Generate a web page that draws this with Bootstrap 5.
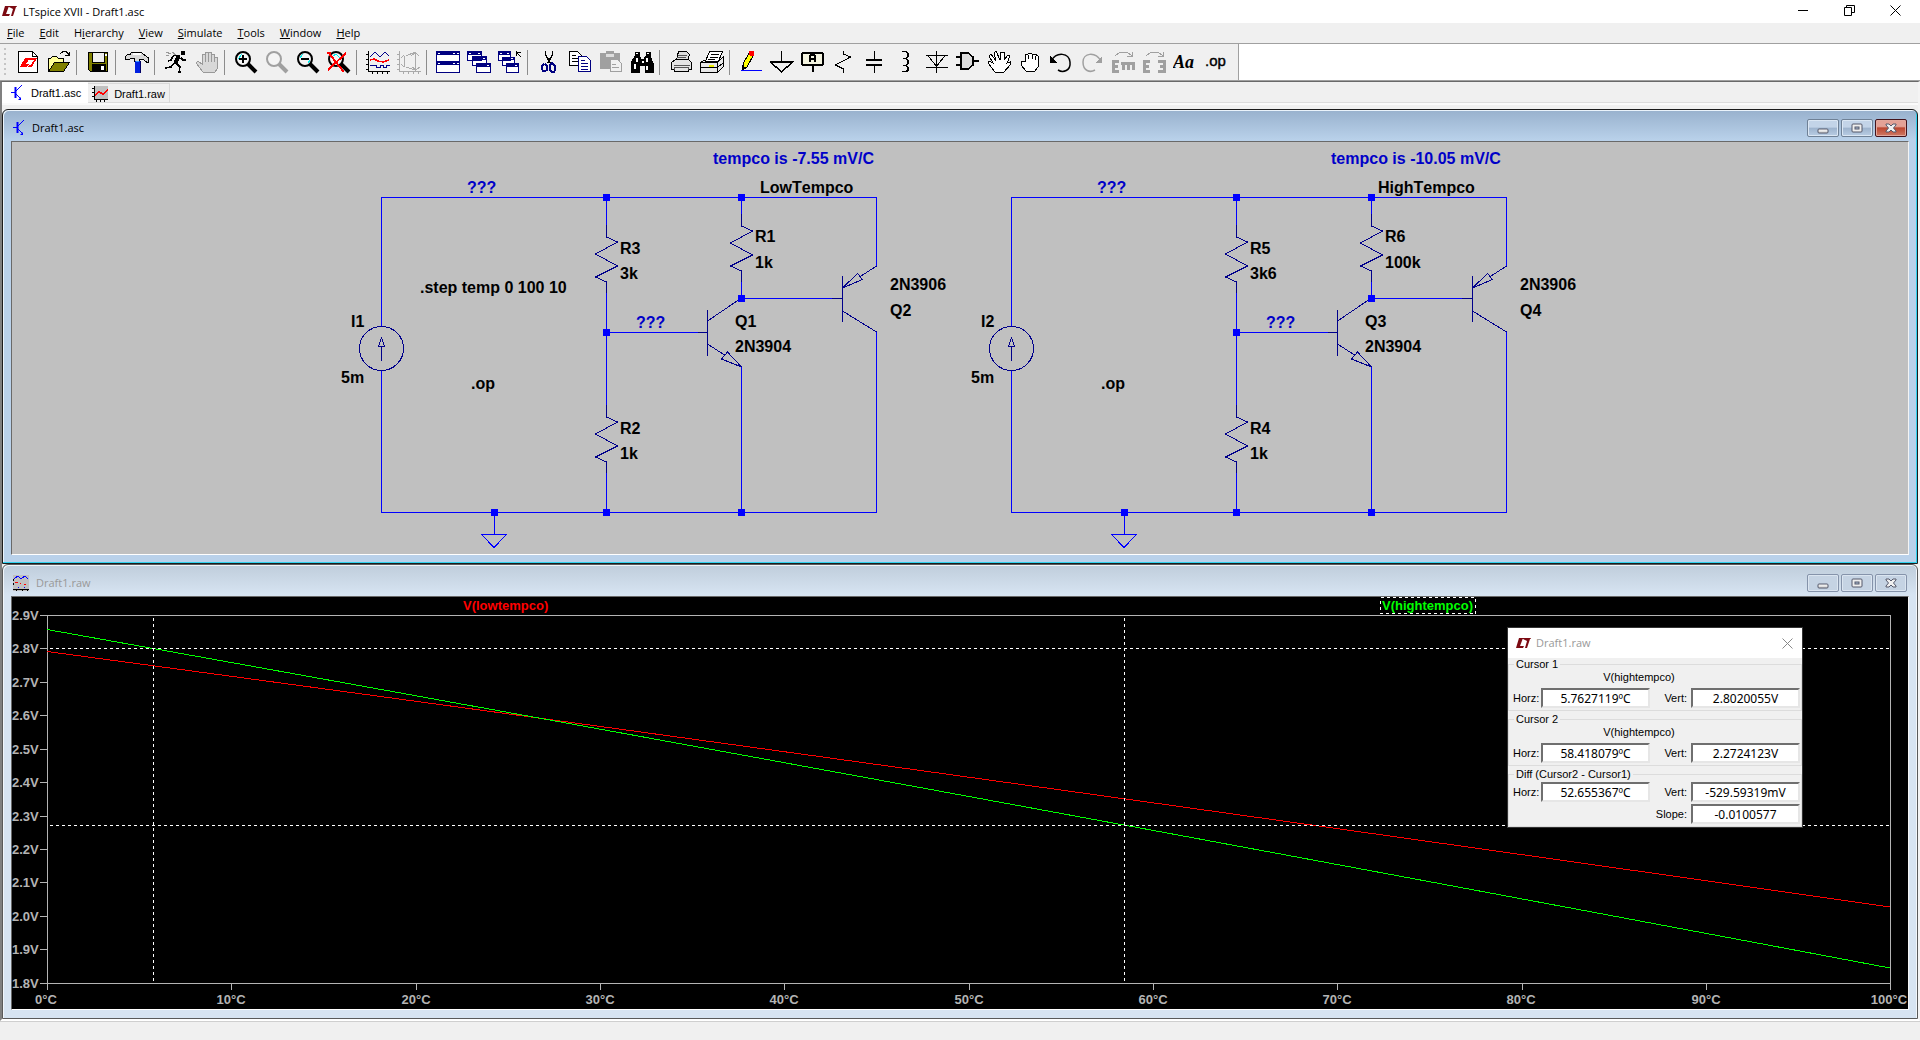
<!DOCTYPE html>
<html lang="en">
<head>
<meta charset="utf-8">
<meta name="viewport" content="width=device-width, initial-scale=1">
<title>LTspice XVII - Draft1.asc</title>
<link href="https://cdn.jsdelivr.net/npm/bootstrap@5.3.0/dist/css/bootstrap.min.css" rel="stylesheet">
<style>
body{background:#f0f0f0;color:#000;font-family:"Open Sans","Noto Sans",sans-serif;font-size:11px;line-height:16px;min-height:100vh}
button{border:0;background:none;padding:0;color:inherit}
svg{display:block;flex:none}
.app-title{height:23px;background:#fff;padding:0 2px}
.app-title .caption{font-size:11px;margin-left:6px}
.sys-btn{width:46px;height:21px;display:flex;align-items:center;justify-content:center}
.menu-bar{height:21px;border-bottom:1px solid #a0a0a0;gap:1px}
.menu-bar a{color:#000;text-decoration:none;padding:2px 7px;font-size:11px;line-height:16px}
.tool-row{background:#fff;height:37px;border-bottom:1px solid #a0a0a0}
.tool-bar{background:#f0f0f0;border-right:1px solid #a0a0a0;padding:0 7px 0 4px;align-items:center}
.grip{width:8px;height:28px;background:repeating-linear-gradient(#c4c4c4 0 2px,transparent 2px 5px) no-repeat;background-size:2px 100%}
.tool-bar button{width:31px;height:32px;display:flex;align-items:center;justify-content:center}
.sep{width:8px;height:25px;background:linear-gradient(#8c8c8c,#8c8c8c) 2px 0/1px 100% no-repeat}
.tool-bar svg{width:24px;height:24px;shape-rendering:crispEdges;fill:none;stroke:#000}
.mdi{border-top:1px solid #696969;border-left:2px solid #808080;border-right:2px solid #f4f4f4;border-bottom:2px solid #fff}
.tab-strip{height:23px;border-bottom:2px solid #fafafa;box-shadow:inset 0 -1px #dcdcdc}
.tab-strip button{font:11px/16px "Liberation Sans",Arial,sans-serif;display:flex;align-items:center;gap:8px;padding:0 7px 0 9px}
.tab-strip .on{background:#fff;height:21px}
.tab-strip .off{height:20px;border:1px solid #d9d9d9;border-left:0;border-bottom:0;padding:0 4px;gap:6px;align-self:flex-end}
.mdi-win{border:1px solid #1c1c1c;border-radius:6px 6px 0 0;padding:0 8px 8px;background:#b9d1ea}
.mdi-win.live{background:linear-gradient(#98b1cd 0,#b9d1ea 30px);box-shadow:inset -1px -1px #2fd2ef,inset 1px 1px #eaf3fb}
.mdi-win.idle{background:linear-gradient(#bfcddb 0,#d7e4f2 30px);border-color:#5a5a5a;box-shadow:inset 1px 1px #f1f6fb,inset -1px 0 #f1f6fb}
.win-head{height:31px;gap:7px;padding:4px 2px 0}
.idle .win-head span{color:#999}
.win-btns{gap:2px}
.win-btns button{width:32px;height:18px;border:1px solid #6f8196;border-radius:2px;box-shadow:inset 0 0 0 1px #dbe7f4;background:linear-gradient(#c3d4e8 0 45%,#9db3cd 50%,#b9cde4);display:flex;align-items:center;justify-content:center}
.win-btns button.shut{border-color:#43131c;box-shadow:inset 0 0 0 1px #e2a79c;background:linear-gradient(#e3a196 0 40%,#bc4630 50%,#cf7a66)}
.idle .win-btns button{border-color:#8593aa;background:#c5d3e3;box-shadow:inset 0 0 0 1px #dbe5f0}
.client{border:1px solid #696969;border-right-color:#f4f4f4;border-bottom-color:#fff;position:relative}
.client>svg{width:100%;height:auto;shape-rendering:crispEdges}
.sheet{background:#c0c0c0}
.sheet text{font:bold 16px "Liberation Sans",Arial,sans-serif;font-kerning:none}
.net{fill:#0000c8}
.plot{background:#000}
.plot text{font:bold 13px "Liberation Sans",Arial,sans-serif}
.readout{position:absolute;top:30px;right:105px;width:296px;background:#f0f0f0;border:1px solid #333;font:11px/13px "Liberation Sans",Arial,sans-serif}
.readout header{height:30px;background:#fff;padding:0 9px 0 8px;color:#999;font:11px/16px "Open Sans",sans-serif;gap:5px}
.readout fieldset{border:1px solid #dcdcdc;padding:0 0 2px;margin-bottom:2px}
.readout fieldset.diff{padding-top:1px;margin-bottom:0}
.readout legend{float:none;width:auto;margin:0 0 0 5px;padding:0 2px;font-size:11px;line-height:13px}
.trace{height:13px;margin-bottom:4px;text-align:center;padding-right:32px}
.pair{display:grid;grid-template-columns:32px 1fr 41px 1fr;align-items:center;row-gap:2px;padding-right:1px}
.pair label{padding-left:4px}
.pair label.rt{grid-column:3;text-align:right;padding:0 4px 0 0;justify-self:end}
.pair input{width:100%;min-width:0;height:20px;border:2px solid;border-color:#6f6f6f #e6e6e6 #e6e6e6 #6f6f6f;padding:0;text-align:center;background:#fff;color:#000;font:12px/16px "Noto Sans","Open Sans",sans-serif}
.status{border-top:1px solid #cfcfcf}
</style>
</head>
<body class="d-flex flex-column">
<svg width="0" height="0" class="position-absolute">
<defs>
<symbol id="lt" viewBox="0 0 15 11"><path fill="#7c0a12" d="M3 0h4L4 8h4l-1 2H0zM6 0h9l-.5 1H14l-3 9H9l2-7-4-2z"/></symbol>
<symbol id="bjt" viewBox="0 0 12 17"><path d="M0 8.500h4M5 7l6-6M5 10l5 5" stroke="#00f" fill="none"/><path d="M4.500 3v11" stroke="#00f" stroke-width="2"/><path d="M10 16H7l3-3z" fill="#00f"/></symbol>
<symbol id="lens" viewBox="0 0 24 24"><circle cx="9" cy="9" r="7" fill="#f4f4f4" stroke-width="2" shape-rendering="auto"/><path d="M14 14l8 8" stroke-width="4" shape-rendering="auto"/></symbol>
<g id="res"><path d="M0 -12V0l11 5-22 12 22 12-22 11L0 45V56"/></g>
<g id="dot"><path d="M-3-3h7v7h-7z" fill="#00f" stroke="none"/></g>
<g id="circuit">
<g fill="none" stroke="#00f">
<path d="M381.500 327V197.500H876.500V266M381.500 370V512.500H876.500V332M606.500 197V237M606.500 282V417M606.500 462V512M741.500 197V226M741.500 271V298.500H832M606 332.500H698M741.500 367V512"/>
</g>
<g fill="none" stroke="#00008b">
<circle cx="381.500" cy="348.500" r="22"/><path d="M381.500 361V346M381.500 338l3 8h-6z"/>
<use href="#res" x="606.500" y="237"/><use href="#res" x="741.500" y="226"/><use href="#res" x="606.500" y="417"/>
<path d="M698 332.500h9.500M707.500 310v46M707.500 321l34-23M707.500 344l17 11M741.500 367l-14-15-6 7z"/>
<path d="M832 298.500h10.500M842.500 276v46M842.500 311l34 21M876.500 266l-17 11M842.500 288l15-14.500 5 6z"/>
</g>
<use href="#dot" x="606" y="197"/><use href="#dot" x="741" y="197"/><use href="#dot" x="741" y="298"/><use href="#dot" x="606" y="332"/><use href="#dot" x="606" y="512"/><use href="#dot" x="741" y="512"/><use href="#dot" x="494" y="512"/>
<path d="M494.500 512v22M481.500 534.500h25l-12.500 13z" fill="none" stroke="#00f"/>
</g>
<linearGradient id="metal" x2="0" y2="1"><stop stop-color="#fff"/><stop offset="1" stop-color="#ccc"/></linearGradient>
<symbol id="w-min" viewBox="0 0 12 12"><rect x="1" y="7" width="10" height="4" rx="1" fill="url(#metal)" stroke="#54586b"/></symbol>
<symbol id="w-max" viewBox="0 0 12 12"><rect x="1" y="2" width="10" height="8" rx="1" fill="#eee" stroke="#54586b"/><rect x="4" y="5" width="4" height="2" fill="#a9bcd4" stroke="#54586b"/></symbol>
<symbol id="w-close" viewBox="0 0 12 12"><path d="M1 2h3l2 2 2-2h3v1L8.500 6 11 9v1H8L6 8l-2 2H1V9l2.500-3L1 3z" fill="#f0f0f0" stroke="#54586b"/></symbol>
</defs>
</svg>

<header class="app-title d-flex align-items-start">
<div class="d-flex align-items-center h-100 me-auto"><svg width="15" height="11"><use href="#lt"/></svg><span class="caption">LTspice XVII - Draft1.asc</span></div>
<button class="sys-btn" aria-label="Minimize"><svg width="11" height="11"><path d="M0 5.500h10" stroke="#000"/></svg></button>
<button class="sys-btn" aria-label="Restore"><svg width="11" height="11" fill="none" stroke="#000"><path d="M.5 2.500h7v8h-7zM2.500 2V.5h8v7H8"/></svg></button>
<button class="sys-btn" aria-label="Close"><svg width="11" height="11"><path d="M.5.5l10 10M10.500.5l-10 10" stroke="#000"/></svg></button>
</header>
<nav class="menu-bar d-flex" aria-label="Menu">
<a href="#"><u>F</u>ile</a><a href="#"><u>E</u>dit</a><a href="#">H<u>i</u>erarchy</a><a href="#"><u>V</u>iew</a><a href="#"><u>S</u>imulate</a><a href="#"><u>T</u>ools</a><a href="#"><u>W</u>indow</a><a href="#"><u>H</u>elp</a>
</nav>
<div class="tool-row d-flex">
<div class="tool-bar d-flex" role="toolbar" aria-label="Tools">
<span class="grip"></span>
<button aria-label="New schematic"><svg viewBox="0 0 24 24"><path d="M2.500 1.500h14l5 5v16h-19z" fill="#fff"/><path d="M16.500 1.500v5h5"/><path d="M9 8h5l-4 6h3l-2 3H4zM13 8h8l-5 9h-5l2-2h2l3-5h-5z" fill="#f00" stroke="none"/></svg></button>
<button aria-label="Open"><svg viewBox="0 0 24 24"><path d="M1.500 21V8.500h2l2-2h4l2 2h5v4" fill="#ff9"/><path d="M1.500 21.500l6-9h15l-6 9z" fill="#808000"/><path d="M13 4l3-2.500h3L22.500 5M18 5.500h4.500V1.500"/></svg></button>
<span class="sep"></span>
<button aria-label="Save"><svg viewBox="0 0 24 24"><path d="M2.500 2.500h19v19h-17l-2-2z" fill="#808000"/><path d="M6 2.500h12v10H6z" fill="#f0f0f0"/><path d="M6 14.500h13v7H6z" fill="#000"/><path d="M15 16h3v4h-3z" fill="#fff" stroke="none"/><path d="M19 4h2v2h-2z" fill="#fff" stroke="none"/></svg></button>
<span class="sep"></span>
<button aria-label="Control panel"><svg viewBox="0 0 24 24"><path d="M.5 7l2-3h3l1-2h9l4 3 4 3v4h-2l-4-3h-3v2H9V8H6L5 9H.5z" fill="#d8d8d8"/><path d="M8 3h8v2H8z" fill="#fff" stroke="none"/><path d="M10 11h5v12h-5z" fill="#0020e0" stroke="none"/><path d="M15.500 11v12" stroke="#006"/><path d="M11 11.500h3" stroke="#39f"/></svg></button>
<span class="sep"></span>
<button aria-label="Run"><svg viewBox="0 0 24 24"><path d="M17 1h4v4h-4z" fill="#000" stroke="none"/><path d="M15 6l-4 7" stroke-width="4"/><path d="M9 5.500h7M17 8l2 2h3M9 6l-2 4-3 1M12 13l4 4-1 5h2M10 13l-3 4-6 1" stroke-width="1.500"/><path d="M2 2l5 2M2 5l3 1M8 2l4 3" stroke="#999"/></svg></button>
<button aria-label="Halt"><svg viewBox="0 0 24 24"><path d="M8 22l-7-9 2-2 4 3V4h3v8V2h3v10V2h3v10V4h3v8-5h3v12l-2 3z" fill="#d8d8d8" stroke="#999"/></svg></button>
<span class="sep"></span>
<button aria-label="Zoom in"><svg viewBox="0 0 24 24"><use href="#lens"/><path d="M4 9l4-5" stroke="#0ee"/><path d="M9 5v8M5 9h8" stroke-width="2"/></svg></button>
<button aria-label="Pan"><svg viewBox="0 0 24 24" style="stroke:#a0a0a0"><use href="#lens"/></svg></button>
<button aria-label="Zoom out"><svg viewBox="0 0 24 24"><use href="#lens"/><path d="M4 8l3-4M12 13l2-3" stroke="#0ee"/><path d="M5 9h8" stroke-width="2"/></svg></button>
<button aria-label="Zoom to fit"><svg viewBox="0 0 24 24"><use href="#lens"/><path d="M5 7l4-3 4 4" stroke="#0ee"/><path d="M1 2l15 19M19 3L1 20M0 3h4M14 20l3 1" stroke="#f00" stroke-width="2"/></svg></button>
<span class="sep"></span>
<button aria-label="Autorange"><svg viewBox="0 0 24 24"><path d="M2.500 1v20.500H24M0 4.500h2M0 9.500h2M0 14.500h2M0 19.500h2M6.500 21v3M11.500 21v3M16.500 21v3M21.500 21v3"/><path d="M4 7l5-5 5 5 5-5 4 4M4 15.500h6v2h4v-2h3v2h3v-2h4" stroke="#008"/><path d="M4 10l4-1 4 2 5 1 6-2" stroke="#f00" stroke-width="1.500"/></svg></button>
<button aria-label="Mark data points"><svg viewBox="0 0 24 24" style="stroke:#aaa"><path d="M2.500 1v20.500H24M0 4.500h2M0 9.500h2M0 14.500h2M0 19.500h2M6.500 21v3M11.500 21v3M16.500 21v3M21.500 21v3M7.500 6v11M4 8l3-3M4 14l3 3M9 6l9-4 4 4-4-4v19M9 17l9 3M14 6l5-4M15 17l4 3 4-3"/></svg></button>
<span class="sep"></span>
<button aria-label="Tile"><svg viewBox="0 0 24 24"><path d="M0.500 1.500h23v21h-23z" fill="#fff" stroke="#000080"/><path d="M0 1h24v4H0zM0 11h24v4H0z" fill="#000080" stroke="none"/><path d="M2 3h2M17 3h2M21 3h2M2 13h2M17 13h2M21 13h2" stroke="#fff"/></svg></button>
<button aria-label="Cascade"><svg viewBox="0 0 24 24"><path d="M.5 1.500h14v9H.5zM5.500 6.500h14v9h-14zM9.500 13.500h14v9h-14z" fill="#fff" stroke="#000080"/><path d="M0 1h15v4H0zM5 6h15v4H5zM9 13h15v4H9z" fill="#000080" stroke="none"/><path d="M2 3h2M11 3h2M16 8h2M20 15h2" stroke="#fff"/></svg></button>
<button aria-label="Close all"><svg viewBox="0 0 24 24"><path d="M.5 1.500h12v9H.5zM4.500 7.500h12v8h-12zM8.500 13.500h12v9h-12z" fill="#fff" stroke="#000080"/><path d="M0 1h13v4H0zM4 7h13v3H4zM8 13h13v4H8z" fill="#000080" stroke="none"/><path d="M2 3h2M9 3h2M13 8h2M17 15h2" stroke="#fff"/><path d="M18 2h5M18.500 1v5M18 2l5 5"/></svg></button>
<span class="sep"></span>
<button aria-label="Cut"><svg viewBox="0 0 24 24"><path d="M8.500 1v4l5 8M15.500 1v4l-5 8" stroke-width="1.500"/><path d="M8 14l2 2v4l-2 1H6l-1-2v-3l2-2M15 13l-2 2v5l2 2h2l1-2v-4l-2-2z" stroke="#000080" stroke-width="1.500"/></svg></button>
<button aria-label="Copy"><svg viewBox="0 0 24 24"><path d="M1.500 1.500h8l4 4v10h-12z" fill="#fff"/><path d="M4 5.500h4M4 8.500h7M4 11.500h7"/><path d="M10.500 6.500h8l4 4v11h-12z" fill="#fff" stroke="#000080"/><path d="M13 10.500h4M13 13.500h7M13 16.500h7M13 19.500h7" stroke="#000080"/></svg></button>
<button aria-label="Paste"><svg viewBox="0 0 24 24"><path d="M1 3h6V1h8v2h6v16H1z" fill="#a0a0a0" stroke="none"/><path d="M7 4h8v3H7z" fill="#ddd" stroke="none"/><path d="M11.500 9.500h7l4 4v8h-11z" fill="#f0f0f0" stroke="#a0a0a0"/><path d="M13 14.500h4M13 17.500h7" stroke="#a0a0a0"/></svg></button>
<button aria-label="Find"><svg viewBox="0 0 24 24"><path d="M1 22v-9l4-7V2h4v4l2 3h3l2-3V2h4v4l3 7v9h-8v-7h-6v7z" fill="#000"/><path d="M7 8v4M5 14v5M17 8v4M17 16v4M7 3v1M18 3v1M11.500 12h2" stroke="#fff" stroke-width="2"/></svg></button>
<span class="sep"></span>
<button aria-label="Print"><svg viewBox="0 0 24 24"><path d="M7.500 10l2-8.500h8l3 3-2 6z" fill="#ddd"/><path d="M2.500 12.500l4-3h13l3 3v7h-3v2h-14v-2h-3z" fill="#e4e4e4"/><path d="M5 15.500h16M5.500 19.500v-2h14v2M9 5h9M8 7h9" stroke="#555"/></svg></button>
<button aria-label="Print setup"><svg viewBox="0 0 24 24"><path d="M5.500 11l4-9.500h13l-4 9.500z" fill="#fff"/><path d="M11 4.500h8M10 7.500h8M8 9.500h7"/><path d="M.5 12.500l5-3M.5 12.500h17v10H.5zM17.500 12.500l6-6v10l-6 6" fill="#e8e8e8"/><path d="M.5 17.500h17l6-5"/><path d="M9 15.500h5" stroke="#ee0" stroke-width="2"/></svg></button>
<span class="sep"></span>
<button aria-label="Draw wire"><svg viewBox="0 0 24 24"><path d="M4 14L10 3l4 3-6 11-4 3z" fill="#ff0"/><path d="M10 1h4v4h-3z" fill="#f00" stroke="#f00"/><path d="M3 20v-5l3 3z" fill="#000"/><path d="M2 20.500h21" stroke="#00f"/></svg></button>
<button aria-label="Ground"><svg viewBox="0 0 24 24"><path d="M11.500 1v11M.5 12h22L11.500 22z" stroke-width="1.500"/></svg></button>
<button aria-label="Label net"><svg viewBox="0 0 24 24"><path d="M2 3h19l1 1v10l-1 1H2l-1-1V4z" stroke-width="2" fill="#f4f4e0"/><path d="M11.500 16v6" stroke-width="2"/><path d="M9 12V6l1-1h3l1 1v6M9 9h5" stroke-width="2"/></svg></button>
<button aria-label="Resistor"><svg viewBox="0 0 24 24"><path d="M11.500 1v3l7 3L3.500 15l8 4v4"/></svg></button>
<button aria-label="Capacitor"><svg viewBox="0 0 24 24"><path d="M11.500 1v8M11.500 15v8"/><path d="M3 10h16M3 15h16" stroke-width="2"/></svg></button>
<button aria-label="Inductor"><svg viewBox="0 0 24 24"><path d="M8 1.500h4l2 2v3l-2 2H9h3l2 2v3l-2 2H9h3l2 2v3l-2 1H8" stroke-width="1.500"/></svg></button>
<button aria-label="Diode"><svg viewBox="0 0 24 24"><path d="M11.500 1v22M.5 5.500h22M3 5.500l8.500 11 8.500-11M.5 17.500h22"/></svg></button>
<button aria-label="Component"><svg viewBox="0 0 24 24"><path d="M5 3h7l5 4v8l-5 4H5zM0 7h5M0 15h5M17 11h6" stroke-width="1.500" fill="#ddd"/></svg></button>
<button aria-label="Move"><svg viewBox="0 0 24 24"><path d="M8 22l-7-9 1-2 4 2L2 6l2-2 5 7L7 3l2-2 4 9 1-8 3 0 0 8 4-5 2 1-3 7 3-1v3l-6 7z" fill="#fff"/></svg></button>
<button aria-label="Drag"><svg viewBox="0 0 24 24"><path d="M8 21l-5-6v-4h4V5l3-1 2-1 2 1 3 0 3 2 1 5-1 6-3 4zM10 5v4M14 4v5M17 6v4" fill="#fff"/></svg></button>
<button aria-label="Undo"><svg viewBox="0 0 24 24"><path d="M2 11C8 1 20 3 21 12s-7 11-12 8" stroke-width="1.500" shape-rendering="auto"/><path d="M1 6v7h7z" fill="#000" stroke="none"/></svg></button>
<button aria-label="Redo"><svg viewBox="0 0 24 24" style="stroke:#a0a0a0"><path d="M21 11C15 1 3 3 3 12s7 11 12 8" stroke-width="1.500" shape-rendering="auto"/><path d="M22 6v7h-7z" fill="#a0a0a0" stroke="none"/></svg></button>
<button aria-label="Rotate"><svg viewBox="0 0 24 24" style="stroke:#a0a0a0"><path d="M4 6l5-4h7l5 4M21 2v4h-5"/><path d="M8 11.500H2.500v10H8M3 16.500h4M10 13.500h14M12 20v-7M17.500 20v-7M22.500 20v-7" stroke-width="3"/></svg></button>
<button aria-label="Mirror"><svg viewBox="0 0 24 24" style="stroke:#a0a0a0"><path d="M4 6l5-4h7l5 4M21 2v4h-5"/><path d="M8 11.500H2.500v10H8M3 16.500h4M16 11.500h6.500v10H16M22 16.500h-4" stroke-width="3"/></svg></button>
<button aria-label="Text"><svg viewBox="0 0 24 24"><text x="0" y="18" font-family="Liberation Serif, serif" font-size="18" font-weight="bold" font-style="italic" fill="#000" stroke="none">Aa</text></svg></button>
<button aria-label="SPICE directive"><svg viewBox="0 0 24 24"><text x="1" y="16" font-family="Liberation Sans, sans-serif" font-size="15" fill="#000" stroke="#000" stroke-width=".4">.op</text></svg></button>
</div>
</div>

<main class="mdi">
<div class="tab-strip d-flex mb-1" role="tablist">
<button class="on" role="tab" aria-selected="true"><svg width="12" height="17"><use href="#bjt"/></svg>Draft1.asc</button>
<button class="off" role="tab" aria-selected="false"><svg width="16" height="16" shape-rendering="crispEdges"><path d="M2 0h14v13H2z" fill="#c0c0c0"/><path d="M2.500 0v13.500H16M0 2.500h2M0 6.500h2M0 10.500h2M4.500 14v2M8.500 14v2M12.500 14v2" stroke="#000" fill="none"/><path d="M3 9l4-3 4 2 5-4" stroke="#f00" stroke-width="1.500" fill="none"/></svg>Draft1.raw</button>
</div>

<section class="mdi-win live">
<div class="win-head d-flex align-items-center">
<svg width="12" height="17"><use href="#bjt"/></svg><span class="me-auto">Draft1.asc</span>
<div class="win-btns d-flex"><button aria-label="Minimize"><svg width="12" height="12"><use href="#w-min"/></svg></button><button aria-label="Maximize"><svg width="12" height="12"><use href="#w-max"/></svg></button><button class="shut" aria-label="Close"><svg width="12" height="12"><use href="#w-close"/></svg></button></div>
</div>
<div class="client sheet">
<svg viewBox="12 142 1896 412">
<use href="#circuit"/><use href="#circuit" x="630"/>
<g class="net"><text x="713" y="164">tempco is -7.55 mV/C</text><text x="467" y="193">???</text><text x="636" y="328">???</text>
<text x="1331" y="164">tempco is -10.05 mV/C</text><text x="1097" y="193">???</text><text x="1266" y="328">???</text></g>
<text x="760" y="193">LowTempco</text><text x="755" y="242">R1</text><text x="755" y="268">1k</text><text x="620" y="254">R3</text><text x="620" y="279">3k</text><text x="420" y="293">.step temp 0 100 10</text><text x="351" y="327">I1</text><text x="341" y="383">5m</text><text x="471" y="389">.op</text><text x="735" y="327">Q1</text><text x="735" y="352">2N3904</text><text x="890" y="290">2N3906</text><text x="890" y="316">Q2</text><text x="620" y="434">R2</text><text x="620" y="459">1k</text>
<text x="1378" y="193">HighTempco</text><text x="1385" y="242">R6</text><text x="1385" y="268">100k</text><text x="1250" y="254">R5</text><text x="1250" y="279">3k6</text><text x="981" y="327">I2</text><text x="971" y="383">5m</text><text x="1101" y="389">.op</text><text x="1365" y="327">Q3</text><text x="1365" y="352">2N3904</text><text x="1520" y="290">2N3906</text><text x="1520" y="316">Q4</text><text x="1250" y="434">R4</text><text x="1250" y="459">1k</text>
</svg>
</div>
</section>

<section class="mdi-win idle">
<div class="win-head d-flex align-items-center">
<svg width="16" height="16" shape-rendering="crispEdges"><path d="M0 0h16v16H0z" fill="#c0c0c0"/><path d="M1 4l4-3 3 3 4-3 3 3" stroke="#00f" fill="none"/><path d="M2 7.500h3M7 8.500h1M11 9.500h2" stroke="#f00"/><path d="M0 14.500h16M3.500 14v2M9.500 14v2M14.500 14v2M.5 4v2M.5 8v2" stroke="#000"/><path d="M5 12.500h1M11 12.500h1" stroke="#00f"/></svg><span class="me-auto">Draft1.raw</span>
<div class="win-btns d-flex"><button aria-label="Minimize"><svg width="12" height="12"><use href="#w-min"/></svg></button><button aria-label="Maximize"><svg width="12" height="12"><use href="#w-max"/></svg></button><button aria-label="Close"><svg width="12" height="12"><use href="#w-close"/></svg></button></div>
</div>
<div class="client plot">
<svg viewBox="12 597 1896 412">
<path d="M40 615.500H1890.500V990M47.500 615V990M40 983.500H1890M40 648.500h7M40 682.500h7M40 715.500h7M40 749.500h7M40 782.500h7M40 816.500h7M40 849.500h7M40 882.500h7M40 916.500h7M40 949.500h7M231.500 983v7M416.500 983v7M600.500 983v7M784.500 983v7M969.500 983v7M1153.500 983v7M1337.500 983v7M1522.500 983v7M1706.500 983v7" fill="none" stroke="#b4b4b4"/>
<path d="M47 651.500Q968 775 1890 907" fill="none" stroke="#f00"/>
<path d="M47 629.500Q968 794 1890 968" fill="none" stroke="#0f0"/>
<path d="M50 648.500H1890M50 825.500H1890M153.500 618V983M1124.500 618V983" fill="none" stroke="#fff" stroke-dasharray="3 3"/>
<g fill="#b4b4b4"><text x="12" y="620">2.9V</text><text x="12" y="653">2.8V</text><text x="12" y="687">2.7V</text><text x="12" y="720">2.6V</text><text x="12" y="754">2.5V</text><text x="12" y="787">2.4V</text><text x="12" y="821">2.3V</text><text x="12" y="854">2.2V</text><text x="12" y="887">2.1V</text><text x="12" y="921">2.0V</text><text x="12" y="954">1.9V</text><text x="12" y="988">1.8V</text></g>
<g fill="#b4b4b4" text-anchor="middle"><text x="46" y="1004">0°C</text><text x="231" y="1004">10°C</text><text x="416" y="1004">20°C</text><text x="600" y="1004">30°C</text><text x="784" y="1004">40°C</text><text x="969" y="1004">50°C</text><text x="1153" y="1004">60°C</text><text x="1337" y="1004">70°C</text><text x="1521" y="1004">80°C</text><text x="1706" y="1004">90°C</text><text x="1889" y="1004">100°C</text></g>
<text x="463" y="610" fill="#f00">V(lowtempco)</text><text x="1382" y="610" fill="#0f0">V(hightempco)</text>
<path d="M1380.500 597.500h95v16h-95z" fill="none" stroke="#fff" stroke-dasharray="3 3"/>
</svg>
<form class="readout">
<header class="d-flex align-items-center"><svg width="15" height="11"><use href="#lt"/></svg><span class="me-auto">Draft1.raw</span><button type="button" aria-label="Close"><svg width="11" height="11"><path d="M.5.5l10 10M10.500.5l-10 10" stroke="#888"/></svg></button></header>
<fieldset><legend>Cursor 1</legend><div class="trace">V(hightempco)</div>
<div class="pair"><label for="h1">Horz:</label><input id="h1" value="5.7627119ºC"><label class="rt" for="v1">Vert:</label><input id="v1" value="2.8020055V"></div></fieldset>
<fieldset><legend>Cursor 2</legend><div class="trace">V(hightempco)</div>
<div class="pair"><label for="h2">Horz:</label><input id="h2" value="58.418079ºC"><label class="rt" for="v2">Vert:</label><input id="v2" value="2.2724123V"></div></fieldset>
<fieldset class="diff"><legend>Diff (Cursor2 - Cursor1)</legend>
<div class="pair"><label for="h3">Horz:</label><input id="h3" value="52.655367ºC"><label class="rt" for="v3">Vert:</label><input id="v3" value="-529.59319mV"><label class="rt" for="sl">Slope:</label><input id="sl" value="-0.0100577"></div></fieldset>
</form>
</div>
</section>
</main>
<footer class="status flex-grow-1"></footer>
<script src="https://cdn.jsdelivr.net/npm/bootstrap@5.3.0/dist/js/bootstrap.bundle.min.js"></script>
</body>
</html>
